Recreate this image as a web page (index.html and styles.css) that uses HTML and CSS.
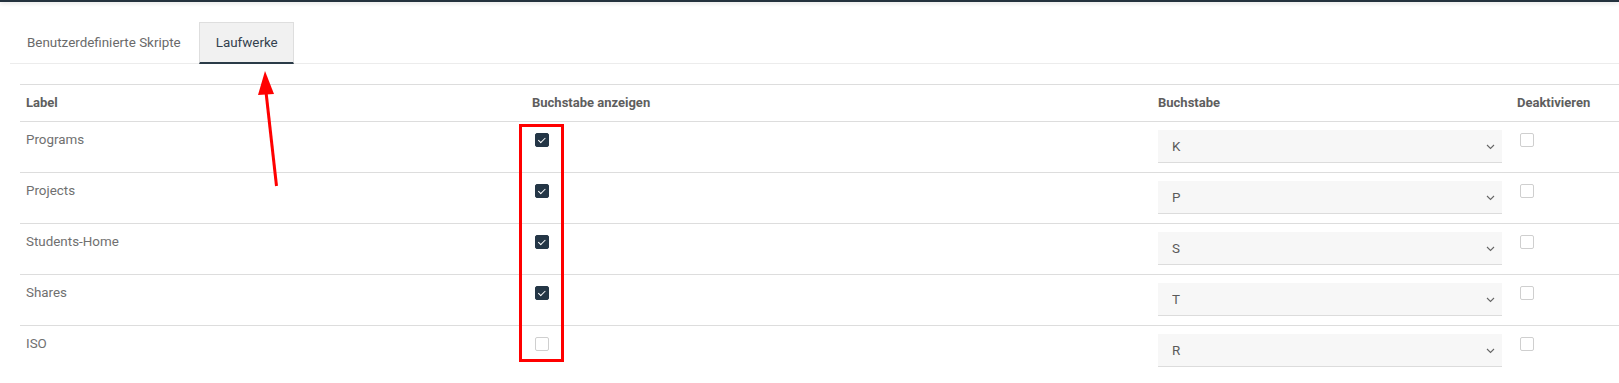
FILE: index.html
```html
<!DOCTYPE html>
<html lang="de">
<head>
    <meta charset="UTF-8">
    <title>Laufwerke</title>
    <link rel="stylesheet" href="styles.css">
</head>
<body>
    <div class="top-bar"></div>
    <ul class="tabs">
        <li class="tab">Benutzerdefinierte Skripte</li>
        <li class="tab active">Laufwerke</li>
    </ul>
    <table class="drive-table">
        <colgroup>
            <col class="col-label"><col class="col-show"><col class="col-letter"><col class="col-off">
        </colgroup>
        <thead>
            <tr><th>Label</th><th>Buchstabe anzeigen</th><th>Buchstabe</th><th>Deaktivieren</th></tr>
        </thead>
        <tbody id="driveRows"></tbody>
    </table>

    <!-- annotation: arrow + red box -->
    <svg class="annotation" width="1619" height="383" viewBox="0 0 1619 383">
        <rect x="520.5" y="125.5" width="42" height="235" fill="none" stroke="#ff0000" stroke-width="3"/>
        <line x1="266" y1="92" x2="276.5" y2="186" stroke="#ff0000" stroke-width="3"/>
        <polygon points="265,71 258,95 274,94" fill="#ff0000"/>
    </svg>

    <script>
        const drives = [
            { label: "Programs", show: true, letter: "K" },
            { label: "Projects", show: true, letter: "P" },
            { label: "Students-Home", show: true, letter: "S" },
            { label: "Shares", show: true, letter: "T" },
            { label: "ISO", show: false, letter: "R" }
        ];

        const body = document.getElementById('driveRows');
        drives.forEach(d => {
            const row = body.insertRow();
            row.innerHTML = `
                <td>${d.label}</td>
                <td><input type="checkbox" class="check" ${d.show ? 'checked' : ''}></td>
                <td><div class="select-wrap">
                    <select class="letter-select"><option>${d.letter}</option></select>
                    <svg class="chevron" width="9" height="6" viewBox="0 0 9 6"><path d="M1 1l3.5 3.5L8 1" fill="none" stroke="#666" stroke-width="1.1"/></svg>
                </div></td>
                <td><input type="checkbox" class="check"></td>
            `;
        });
    </script>
</body>
</html>
```
FILE: styles.css
```css
html, body { margin: 0; padding: 0; background: #fff; font-family: Roboto, "Liberation Sans", sans-serif; font-size: 13.4px; color: #707070; }
.top-bar { height: 2px; background: #24323e; box-shadow: 0 1px 4px rgba(0, 0, 0, 0.18); }
.tabs { list-style: none; margin: 20px 0 0 10px; padding: 0; display: flex; gap: 2px; border-bottom: 1px solid #ececec; }
.tab { padding: 0 15px 0 16px; height: 39px; line-height: 40px; color: #6a6a6a; border: 1px solid transparent; border-bottom: 2px solid transparent; margin-bottom: -1px; }
.tab.active { background: #f1f1f1; border-color: #dedede; border-bottom-color: #2b3b48; color: #33414e; }
.drive-table { margin: 20px 0 0 20px; width: calc(100% - 20px); border-collapse: collapse; table-layout: fixed; }
.col-label { width: 506px; }
.col-show { width: 626px; }
.col-letter { width: 359px; }
.drive-table th, .drive-table td { text-align: left; padding: 8px 6px; line-height: 20px; vertical-align: top; border-top: 1px solid #dddddd; }
.drive-table th { font-size: 13px; font-weight: bold; color: #5e5e5e; padding-bottom: 8px; }
.drive-table td { height: 34px; }
.check { appearance: none; -webkit-appearance: none; width: 14px; height: 14px; margin: 3px 0 0 3px; border: 1px solid #cfcfcf; border-radius: 2px; background: #fff; position: relative; display: block; }
.check:checked { background: #243646; border-color: #243646; }
.check:checked::after { content: ""; position: absolute; left: 4px; top: 2px; width: 3px; height: 5.5px; border: solid #fff; border-width: 0 1.8px 1.8px 0; transform: rotate(45deg); }
.select-wrap { position: relative; width: 344px; }
.letter-select { appearance: none; -webkit-appearance: none; width: 100%; height: 33px; border: none; border-bottom: 1px solid #dcdcdc; background: #f7f7f7; padding: 0 14px; font-family: inherit; font-size: 13.4px; color: #5a5a5a; outline: none; }
.chevron { position: absolute; right: 7px; top: 14px; }
.annotation { position: absolute; top: 0; left: 0; pointer-events: none; }
```
